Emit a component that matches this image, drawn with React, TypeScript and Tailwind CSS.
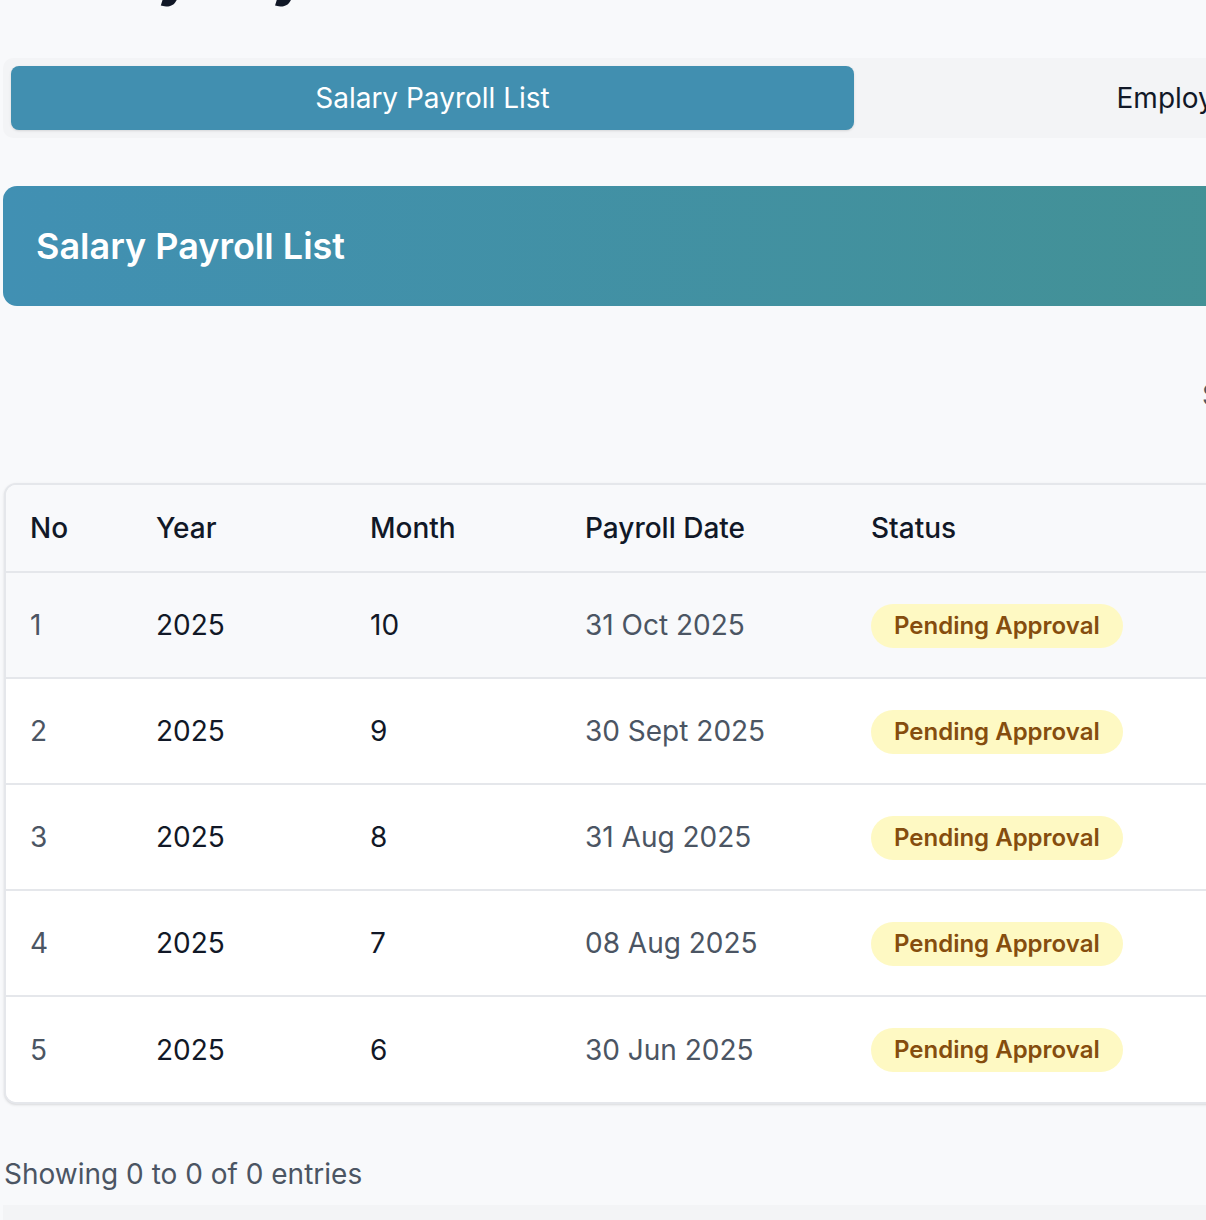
import React, { useState } from 'react';

interface PayrollRow {
  no: number;
  year: number;
  month: number;
  date: string;
  status: string;
}

const rows: PayrollRow[] = [
  { no: 1, year: 2025, month: 10, date: '31 Oct 2025', status: 'Pending Approval' },
  { no: 2, year: 2025, month: 9, date: '30 Sept 2025', status: 'Pending Approval' },
  { no: 3, year: 2025, month: 8, date: '31 Aug 2025', status: 'Pending Approval' },
  { no: 4, year: 2025, month: 7, date: '08 Aug 2025', status: 'Pending Approval' },
  { no: 5, year: 2025, month: 6, date: '30 Jun 2025', status: 'Pending Approval' },
];

const Tabs: React.FC<{ active: number; onChange: (i: number) => void }> = ({
  active,
  onChange,
}) => {
  const tabs = ['Salary Payroll List', 'Employee Salary Details'];
  return (
    <div className="flex w-[1703px] rounded-[10px] bg-[#f3f4f6] p-[8px]">
      {tabs.map((t, i) => (
        <button
          key={t}
          onClick={() => onChange(i)}
          className={`h-[64px] w-[843px] rounded-[8px] text-[28px] ${
            active === i
              ? 'bg-[#418fb0] text-white shadow-sm'
              : 'bg-transparent text-[#111827]'
          }`}
        >
          {t}
        </button>
      ))}
    </div>
  );
};

const StatusBadge: React.FC<{ status: string }> = ({ status }) => (
  <span className="inline-flex h-[44px] items-center rounded-full bg-[#fef9c3] px-[23px] text-[24px] font-semibold text-[#854d0e]">
    {status}
  </span>
);

const PayrollTable: React.FC = () => (
  <div className="w-[1703px] overflow-hidden rounded-[12px] border-2 border-[#e5e7eb] bg-white shadow-sm">
    <table className="w-full table-fixed border-collapse text-left">
      <thead>
        <tr className="h-[87px] bg-[#f8f9fb] text-[28px] font-medium text-[#111827]">
          <th className="w-[126px] pl-[24px] font-medium">No</th>
          <th className="w-[214px] pl-[24px] font-medium">Year</th>
          <th className="w-[215px] pl-[24px] font-medium">Month</th>
          <th className="w-[286px] pl-[24px] font-medium">Payroll Date</th>
          <th className="pl-[24px] font-medium">Status</th>
        </tr>
      </thead>
      <tbody>
        {rows.map((r, i) => (
          <tr
            key={r.no}
            className={`h-[106px] border-t-2 border-[#e5e7eb] text-[28px] ${
              i === 0 ? 'bg-[#f8f9fb]' : 'bg-white'
            }`}
          >
            <td className="pl-[24px] text-[#4b5563]">{r.no}</td>
            <td className="pl-[24px] text-[#111827]">{r.year}</td>
            <td className="pl-[24px] text-[#111827]">{r.month}</td>
            <td className="pl-[24px] text-[#4b5563]">{r.date}</td>
            <td className="pl-[24px]">
              <StatusBadge status={r.status} />
            </td>
          </tr>
        ))}
      </tbody>
    </table>
  </div>
);

export default function App() {
  const [tab, setTab] = useState(0);

  return (
    <div
      className="h-[1220px] w-full overflow-hidden bg-[#f8f9fb]"
      style={{ fontFamily: 'Inter, "Noto Sans", sans-serif' }}
    >
      <div className="w-[1720px] pl-[3px]">
        <h1 className="mt-[-49px] mb-[59px] h-[48px] pl-[14px] text-[56px] leading-[48px] font-bold text-[#111827]">
          Salary Payroll
        </h1>

        <Tabs active={tab} onChange={setTab} />

        <div className="mt-[48px] flex h-[120px] w-[1703px] items-center rounded-[14px] bg-gradient-to-r from-[#4190b3] to-[#449189] px-[33px]">
          <h2 className="text-[36px] font-semibold text-white">Salary Payroll List</h2>
        </div>

        <div className="flex h-[177px] w-[1703px] items-center">
          <div className="grid w-full grid-cols-[1199px_1fr] items-center">
            <div />
            <div className="flex items-center gap-[12px]">
              <span className="text-[28px] text-[#4b5563]">Search:</span>
              <div className="h-[56px] w-[380px] rounded-[8px] border-2 border-[#d1d5db] bg-white" />
            </div>
          </div>
        </div>

        <div className="pl-[1px]">
          <PayrollTable />
        </div>

        <p className="mt-[50px] pl-[1px] text-[28px] leading-[40px] text-[#4b5563]">
          Showing 0 to 0 of 0 entries
        </p>
        <div className="mt-[11px] h-[40px] bg-[#f3f4f6]" />
      </div>
    </div>
  );
}
